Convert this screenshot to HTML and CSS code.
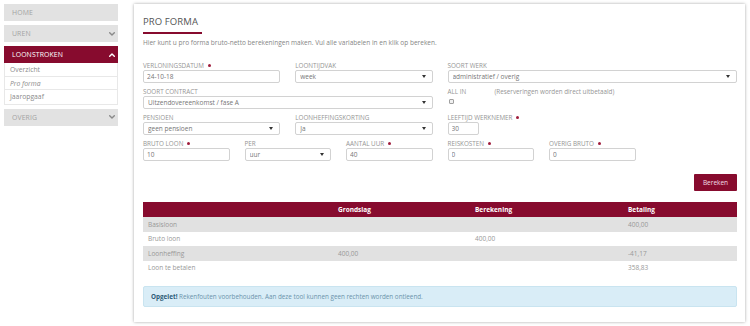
FILE: index.html
```html
<!DOCTYPE html>
<html lang="nl">
<head>
<meta charset="utf-8">
<title>Pro forma</title>
<link rel="stylesheet" href="styles.css">
</head>
<body>
<div class="layout">
  <nav class="sidebar">
    <a class="nav-item">HOME</a>
    <a class="nav-item">UREN
      <svg class="chev" viewBox="0 0 6 4" width="6" height="4"><polyline points="0.7,0.7 3,3 5.3,0.7"/></svg>
    </a>
    <a class="nav-item active">LOONSTROKEN
      <svg class="chev" viewBox="0 0 6 4" width="6" height="4"><polyline points="0.7,3.3 3,1 5.3,3.3"/></svg>
    </a>
    <ul class="subnav">
      <li>Overzicht</li>
      <li class="current">Pro forma</li>
      <li>Jaaropgaaf</li>
    </ul>
    <a class="nav-item">OVERIG
      <svg class="chev" viewBox="0 0 6 4" width="6" height="4"><polyline points="0.7,0.7 3,3 5.3,0.7"/></svg>
    </a>
  </nav>

  <main class="panel">
    <h1 class="title">PRO FORMA</h1>
    <p class="intro">Hier kunt u pro forma bruto-netto berekeningen maken. Vul alle variabelen in en klik op bereken.</p>

    <form class="form-grid">
      <div class="field span3">
        <label>Verloningsdatum <i class="req"></i></label>
        <input class="control" type="text" value="24-10-18">
      </div>
      <div class="field span3">
        <label>Loontijdvak</label>
        <div class="select"><select class="control"><option>week</option></select></div>
      </div>
      <div class="field span6">
        <label>Soort werk</label>
        <div class="select"><select class="control"><option>administratief / overig</option></select></div>
      </div>

      <div class="field span6">
        <label>Soort contract</label>
        <div class="select"><select class="control"><option>Uitzendovereenkomst / fase A</option></select></div>
      </div>
      <div class="field span6">
        <label><span class="allin">All in</span><span class="note">(Reserveringen worden direct uitbetaald)</span></label>
        <input class="check" type="checkbox">
      </div>

      <div class="field span3">
        <label>Pensioen</label>
        <div class="select"><select class="control"><option>geen pensioen</option></select></div>
      </div>
      <div class="field span3">
        <label>Loonheffingskorting</label>
        <div class="select"><select class="control"><option>Ja</option></select></div>
      </div>
      <div class="field span6">
        <label>Leeftijd werknemer <i class="req"></i></label>
        <input class="control short" type="text" value="30">
      </div>

      <div class="field span2">
        <label>Bruto loon <i class="req"></i></label>
        <input class="control" type="text" value="10">
      </div>
      <div class="field span2">
        <label>Per</label>
        <div class="select"><select class="control"><option>uur</option></select></div>
      </div>
      <div class="field span2">
        <label>Aantal uur <i class="req"></i></label>
        <input class="control" type="text" value="40">
      </div>
      <div class="field span2">
        <label>Reiskosten <i class="req"></i></label>
        <input class="control" type="text" value="0">
      </div>
      <div class="field span2">
        <label>Overig bruto <i class="req"></i></label>
        <input class="control" type="text" value="0">
      </div>
    </form>

    <div class="actions">
      <button class="btn" type="button">Bereken</button>
    </div>

    <table class="result">
      <colgroup>
        <col class="c1"><col class="c2"><col class="c3"><col class="c4">
      </colgroup>
      <thead>
        <tr><th></th><th>Grondslag</th><th>Berekening</th><th>Betaling</th></tr>
      </thead>
      <tbody>
        <tr><td>Basisloon</td><td></td><td></td><td>400,00</td></tr>
        <tr><td>Bruto loon</td><td></td><td>400,00</td><td></td></tr>
        <tr><td>Loonheffing</td><td>400,00</td><td></td><td>-41,17</td></tr>
        <tr><td>Loon te betalen</td><td></td><td></td><td>358,83</td></tr>
      </tbody>
    </table>

    <div class="alert"><strong>Opgelet!</strong>&nbsp;Rekenfouten voorbehouden. Aan deze tool kunnen geen rechten worden ontleend.</div>
  </main>
</div>
</body>
</html>
```

FILE: styles.css
```css
* { box-sizing: border-box; }

html, body { margin: 0; padding: 0; background: #fff; }

body {
  font-family: "Open Sans", "Liberation Sans", sans-serif;
  color: #808080;
  font-size: 6.5px;
}

.layout {
  display: flex;
  align-items: flex-start;
  gap: 16px;
  padding: 4px 5px 4px 4px;
}

/* Sidebar */
.sidebar {
  width: 114px;
  flex: none;
  display: flex;
  flex-direction: column;
}

.nav-item {
  height: 17px;
  display: flex;
  align-items: center;
  justify-content: space-between;
  padding: 0 3px 0 8px;
  background: #e2e2e2;
  color: #a3a3a3;
  font-size: 6.9px;
  letter-spacing: 0.1px;
  margin-bottom: 4px;
}

.nav-item.active {
  background: #870b2e;
  color: #fff;
  margin-bottom: 0;
}

.chev {
  fill: none;
  stroke: #8a8a8a;
  stroke-width: 1.4;
  stroke-linecap: round;
  stroke-linejoin: round;
}

.nav-item.active .chev { stroke: #fff; }

.subnav {
  list-style: none;
  margin: 0 0 4px;
  padding: 0;
  border: 1px solid #e8e8e8;
  border-top: 0;
}

.subnav li {
  height: 13.5px;
  line-height: 13px;
  padding-left: 5px;
  font-size: 6.8px;
  color: #8a8a8a;
  border-bottom: 1px solid #e8e8e8;
}

.subnav li:last-child { border-bottom: 0; }

.subnav li.current { font-style: italic; }

/* Panel */
.panel {
  width: 611px;
  flex: none;
  background: #fff;
  box-shadow: 0 0 3px rgba(0, 0, 0, 0.35);
  padding: 12px 8px 15px 9px;
}

.title {
  margin: 0;
  font-size: 9.5px;
  line-height: 12px;
  font-weight: normal;
  color: #555;
  letter-spacing: 0.1px;
}

.title::after {
  content: "";
  display: block;
  width: 59px;
  height: 2px;
  margin-top: 4px;
  background: #870b2e;
}

.intro {
  margin: 4px 0 0;
  font-size: 6.5px;
  line-height: 9px;
  color: #858585;
}

/* Form */
.form-grid {
  display: grid;
  grid-template-columns: repeat(12, 1fr);
  column-gap: 15px;
  row-gap: 4px;
  margin-top: 14px;
}

.span2 { grid-column: span 2; }
.span3 { grid-column: span 3; }
.span6 { grid-column: span 6; }

.field label {
  display: block;
  height: 9px;
  line-height: 9px;
  font-size: 6.3px;
  text-transform: uppercase;
  color: #959595;
  white-space: nowrap;
}

.req {
  display: inline-block;
  width: 3px;
  height: 3px;
  border-radius: 50%;
  background: #9e1c3c;
  vertical-align: 1px;
  margin-left: 2px;
}

.allin {
  display: inline-block;
  width: 47px;
}

.note { text-transform: none; }

.control {
  display: block;
  width: 100%;
  height: 13px;
  margin: 0;
  padding: 0 3px;
  border: 1px solid #d2d2d2;
  border-radius: 2px;
  background: #fff;
  font-family: inherit;
  font-size: 6.5px;
  color: #767676;
  outline: none;
  -webkit-appearance: none;
  appearance: none;
}

.control.short { width: 31px; }

.select { position: relative; }

.select .control { padding-left: 4px; }

.select::after {
  content: "";
  position: absolute;
  right: 7px;
  top: 5px;
  border-left: 2px solid transparent;
  border-right: 2px solid transparent;
  border-top: 3px solid #333;
}

.check {
  -webkit-appearance: none;
  appearance: none;
  display: block;
  width: 5px;
  height: 5px;
  margin: 3px 0 0 1px;
  border: 1px solid #a0a0a0;
  border-radius: 1px;
  background: #f0f0f0;
}

/* Button */
.actions {
  display: flex;
  justify-content: flex-end;
  margin-top: 13px;
}

.btn {
  width: 43px;
  height: 17px;
  border: 0;
  border-radius: 1px;
  background: #870b2e;
  color: #f2dfe4;
  font-family: inherit;
  font-size: 6.5px;
  padding: 0;
}

/* Table */
.result {
  width: 100%;
  margin-top: 11px;
  border-collapse: collapse;
  table-layout: fixed;
  font-size: 6.5px;
}

.c1 { width: 190px; }
.c2 { width: 137px; }
.c3 { width: 153px; }
.c4 { width: 114px; }

.result th {
  height: 15px;
  padding: 0 5px;
  background: #870b2e;
  color: #fff;
  text-align: left;
  font-weight: bold;
}

.result td {
  height: 14.5px;
  padding: 0 5px;
  color: #989898;
}

.result tbody tr:nth-child(odd) td { background: #e1e1e1; }

/* Alert */
.alert {
  display: flex;
  align-items: center;
  height: 21px;
  margin-top: 11px;
  padding: 0 7px;
  background: #d9edf7;
  border: 1px solid #c9e4f0;
  border-radius: 2px;
  color: #6b93ab;
  font-size: 6.3px;
}

.alert strong { color: #2d5c78; }
```
